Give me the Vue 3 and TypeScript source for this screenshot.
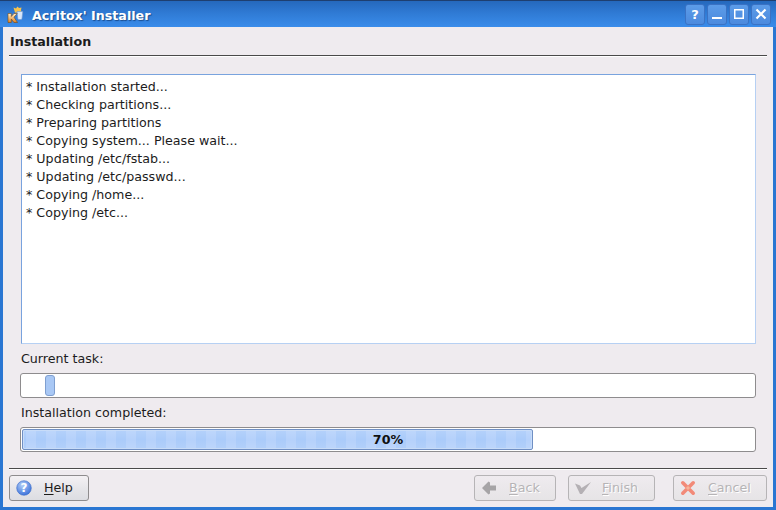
<script setup lang="ts">
const logLines: string[] = [
  '* Installation started...',
  '* Checking partitions...',
  '* Preparing partitions',
  '* Copying system... Please wait...',
  '* Updating /etc/fstab...',
  '* Updating /etc/passwd...',
  '* Copying /home...',
  '* Copying /etc...',
]
const progress = 70
const fillWidth = progress * 7.3
</script>

<template>
  <div class="window">
    <header class="titlebar">
      <svg class="app-icon" width="18" height="18" viewBox="0 0 18 18">
        <defs>
          <linearGradient id="kg" x1="0" y1="0" x2="0" y2="1">
            <stop offset="0" stop-color="#fff1cf" />
            <stop offset="1" stop-color="#e07f1c" />
          </linearGradient>
        </defs>
        <path d="M6.500 2.500l2.500 1 1.500-2 1.500 1.500 2.500-.5-.5 2.500.5 2.500H8z" fill="#f8c34c" />
        <path d="M10 6.500h5.800l-.8 7q-.1 1-1 1H11.800q-.9 0-1-1z" fill="#d6e6fb" stroke="#6f97cf" stroke-width=".6" />
        <path d="M1 8.500h3.300v3l2.700-3h3.200L7 12.200 10.500 17.500H6.900L4.300 14v3.500H1z" fill="url(#kg)" stroke="#7a4a12" stroke-width=".6" />
      </svg>
      <span class="title">Acritox' Installer</span>
      <div class="controls">
        <div class="ctl"><span class="q">?</span></div>
        <div class="ctl">
          <svg width="14" height="14" viewBox="0 0 14 14"><rect x="2" y="10" width="10" height="2" fill="#fff" /></svg>
        </div>
        <div class="ctl">
          <svg width="14" height="14" viewBox="0 0 14 14"><rect x="2.750" y="2.750" width="8.500" height="8.500" fill="none" stroke="#fff" stroke-width="1.500" /></svg>
        </div>
        <div class="ctl">
          <svg width="14" height="14" viewBox="0 0 14 14"><path d="M2.500 2.500l9 9M11.500 2.500l-9 9" stroke="#fff" stroke-width="2.200" /></svg>
        </div>
      </div>
    </header>

    <main class="body">
      <h1 class="heading">Installation</h1>
      <div class="rule"></div>

      <section class="content">
        <div class="log">
          <div v-for="line in logLines" :key="line" class="log-line">{{ line }}</div>
        </div>

        <div class="label">Current task:</div>
        <div class="bar">
          <div class="busy"></div>
        </div>

        <div class="label">Installation completed:</div>
        <div class="bar total">
          <div class="fill" :style="{ width: fillWidth + 'px' }"></div>
          <span class="pct">{{ progress }}%</span>
        </div>
      </section>

      <div class="rule bottom"></div>

      <footer class="buttons">
        <button class="btn help">
          <svg width="16" height="16" viewBox="0 0 16 16">
            <defs>
              <radialGradient id="helpg" cx=".4" cy=".3" r=".8">
                <stop offset="0" stop-color="#b4cff7" />
                <stop offset="1" stop-color="#2f68d8" />
              </radialGradient>
            </defs>
            <circle cx="8" cy="8" r="7.300" fill="url(#helpg)" stroke="#3a6cc8" stroke-width=".6" />
            <text x="8" y="12.400" text-anchor="middle" class="help-q">?</text>
          </svg>
          <span class="btn-text"><u>H</u>elp</span>
        </button>
        <div class="spacer"></div>
        <button class="btn off back" disabled>
          <svg width="16" height="16" viewBox="0 0 16 16">
            <path d="M1 8l6.500-6.500 1.500 1V5.500h6v5H9v3l-1.500 1z" fill="#a6a4a6" />
          </svg>
          <span class="btn-text"><u>B</u>ack</span>
        </button>
        <button class="btn off finish" disabled>
          <svg width="18" height="16" viewBox="0 0 18 16">
            <path d="M1 3.500l5 2 1.500 2.500L17 2 8 14H6z" fill="#b4b0b4" />
          </svg>
          <span class="btn-text"><u>F</u>inish</span>
        </button>
        <button class="btn off cancel" disabled>
          <svg width="16" height="16" viewBox="0 0 16 16">
            <path d="M2.800 2.800l10.400 10.400M13.200 2.800L2.800 13.200" stroke="#f28a78" stroke-width="3.600" stroke-linecap="round" />
            <circle cx="8" cy="8" r="1.800" fill="#f6b59a" />
          </svg>
          <span class="btn-text"><u>C</u>ancel</span>
        </button>
      </footer>
    </main>
  </div>
</template>

<style>
html, body { margin: 0; padding: 0; overflow: hidden; }
</style>

<style scoped>
.window {
  width: 776px;
  height: 510px;
  box-sizing: border-box;
  display: flex;
  flex-direction: column;
  background: #2a76d2;
  padding: 0 3px 3px;
  font-family: "DejaVu Sans", sans-serif;
  font-size: 12.67px;
  color: #1c1c1c;
}
.titlebar {
  height: 27px;
  flex: none;
  margin: 0 -3px;
  padding: 0 5px 0 7px;
  display: flex;
  align-items: center;
  background: linear-gradient(#2568bc 0, #2f7ad4 45%, #3a8cea 100%);
  border-top: 1px solid #1e3f70;
  box-sizing: border-box;
}
.app-icon { flex: none; }
.title {
  margin-left: 7px;
  padding-top: 2px;
  color: #fff;
  font-weight: bold;
  font-size: 12.67px;
  text-shadow: 1px 1px 1px #1b4d8f;
}
.controls { margin-left: auto; display: flex; gap: 2px; }
.ctl {
  width: 20px;
  height: 21px;
  box-sizing: border-box;
  border: 1px solid #3a72c4;
  border-radius: 3px;
  background: linear-gradient(#5c9ce8, #4c8ade);
  display: flex;
  align-items: center;
  justify-content: center;
}
.q { color: #fff; font-weight: bold; font-size: 13px; line-height: 1; }
.body {
  flex: 1;
  background: #efebef;
  padding: 0 6px 6px;
  display: flex;
  flex-direction: column;
  min-height: 0;
}
.heading {
  margin: 0;
  height: 28px;
  line-height: 29px;
  font-size: 12.67px;
  font-weight: bold;
  padding-left: 1px;
}
.rule {
  height: 1px;
  background: #4a4a4a;
  border-bottom: 1px solid #fff;
  flex: none;
}
.content {
  flex: 1;
  padding: 17px 11px 0 11px;
  display: flex;
  flex-direction: column;
}
.log {
  height: 270px;
  box-sizing: border-box;
  margin-left: 1px;
  background: #fff;
  border: 1px solid #b6d0f3;
  border-top-color: #79a3de;
  border-left-color: #79a3de;
  padding: 3px 4px;
}
.log-line { height: 18px; line-height: 18px; white-space: nowrap; }
.label { height: 18px; line-height: 20px; margin: 5px 0 0 1px; }
.bar {
  position: relative;
  height: 25px;
  margin-top: 6px;
  box-sizing: border-box;
  background: #fff;
  border: 1px solid #8e8c8e;
  border-radius: 3px;
}
.busy {
  position: absolute;
  left: 24px;
  top: 1px;
  bottom: 1px;
  width: 10px;
  background: #a9c8f5;
  border: 1px solid #7f9fd0;
  border-radius: 3px;
  box-sizing: border-box;
}
.total { display: flex; align-items: center; justify-content: center; }
.fill {
  position: absolute;
  left: 1px;
  top: 1px;
  bottom: 1px;
  box-sizing: border-box;
  border: 1px solid #6f8fc4;
  border-radius: 2px;
  box-shadow: inset 0 0 0 1px #c8dcf8;
  background:
    linear-gradient(rgba(255, 255, 255, .12), rgba(255, 255, 255, 0) 50%, rgba(255, 255, 255, .1)),
    repeating-linear-gradient(90deg, #aacbfa -7px 3px, #b5d1fb 3px 13px);
}
.pct { position: relative; font-weight: bold; font-size: 12.67px; color: #111; }
.rule.bottom { margin-bottom: 5px; }
.buttons { display: flex; height: 26px; flex: none; }
.spacer { flex: 1; }
.btn {
  height: 26px;
  box-sizing: border-box;
  border: 1px solid #8e8c8e;
  border-radius: 3px;
  background: linear-gradient(#f4f1f4 0, #e4e4e8 60%, #dcdde2 100%);
  font: inherit;
  color: #1c1c1c;
  display: flex;
  align-items: center;
  padding: 0 6px;
  cursor: default;
}
.btn-text { padding-bottom: 2px; }
.btn u { text-underline-offset: 2px; }
.help { width: 80px; gap: 12px; }
.help-q { font: bold 12px "DejaVu Sans", sans-serif; fill: #fff; }
.off { color: #b6b4b6; border-color: #b6b4b6; background: linear-gradient(#efebef 0, #e6e4e6 100%); text-shadow: 1px 1px 0 #fff; }
.back { width: 82px; gap: 12px; }
.finish { width: 87px; margin-left: 12px; gap: 10px; padding-left: 5px; }
.cancel { width: 94px; margin-left: 18px; gap: 12px; }
</style>
